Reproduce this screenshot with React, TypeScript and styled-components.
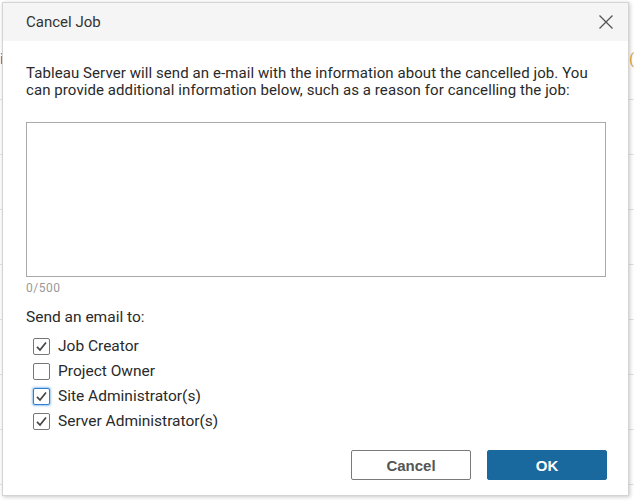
import React from "react";
import styled, { createGlobalStyle } from "styled-components";

const Global = createGlobalStyle`
  html, body { margin: 0; padding: 0; background: #fff; }
  body { width: 634px; height: 502px; overflow: hidden; font-family: Roboto, "Liberation Sans", Arial, sans-serif; }
  * { box-sizing: border-box; }
`;

const Page = styled.div`
  position: relative;
  width: 634px;
  height: 502px;
  overflow: hidden;
  background: #fff;
`;

const BgList = styled.div`
  display: flex;
  flex-direction: column;
  padding-top: 45px;
`;

const BgRow = styled.div`
  height: 55px;
  border-bottom: 1px solid #e3e3e3;
  display: flex;
  align-items: center;
  justify-content: space-between;
  font-size: 14px;
`;

const BgMark = styled.span<{ $c: string }>`
  color: ${(p) => p.$c};
  font-size: 14px;
  margin-top: -26px;
`;

const Dialog = styled.div`
  position: absolute;
  left: 2px;
  top: 2px;
  width: 627px;
  height: 494px;
  background: #fff;
  border: 1px solid #d4d4d4;
  box-shadow: 1px 1px 4px rgba(0, 0, 0, 0.22);
  display: flex;
  flex-direction: column;
`;

const Header = styled.div`
  height: 38px;
  background: #f5f5f5;
  display: flex;
  align-items: center;
  justify-content: space-between;
  padding: 0 10px 0 23px;
`;

const Title = styled.div`
  font-size: 15px;
  color: #333;
`;

const CloseButton = styled.button`
  width: 24px;
  height: 24px;
  border: none;
  background: transparent;
  padding: 0;
  display: flex;
  align-items: center;
  justify-content: center;
  cursor: pointer;
`;

const Body = styled.div`
  flex: 1;
  display: flex;
  flex-direction: column;
  padding: 24px 21px 15px 23px;
`;

const Intro = styled.p`
  margin: 0;
  font-size: 15px;
  letter-spacing: 0.08px;
  line-height: 17px;
  color: #2a2a2a;
`;

const TextArea = styled.textarea`
  margin-top: 23px;
  width: 580px;
  height: 155px;
  border: 1px solid #a9a9a9;
  border-radius: 0;
  resize: none;
  outline: none;
  font-family: inherit;
  font-size: 14px;
`;

const Counter = styled.div`
  margin-top: 5px;
  font-size: 12px;
  letter-spacing: 0.5px;
  line-height: 13px;
  color: #999;
`;

const SectionLabel = styled.div`
  margin-top: 13px;
  font-size: 15.5px;
  line-height: 18px;
  color: #2a2a2a;
`;

const CheckList = styled.div`
  margin-top: 12px;
  display: flex;
  flex-direction: column;
  gap: 9px;
  padding-left: 7px;
`;

const CheckRow = styled.label`
  display: flex;
  align-items: center;
  gap: 8px;
  height: 16px;
  font-size: 15.5px;
  color: #2a2a2a;
`;

const Box = styled.span<{ $focus?: boolean }>`
  width: 17px;
  height: 17px;
  border: 1px solid ${(p) => (p.$focus ? "#2f7fd1" : "#777")};
  border-radius: 2px;
  background: #fff;
  display: flex;
  align-items: center;
  justify-content: center;
  box-shadow: ${(p) => (p.$focus ? "0 0 2px 1px rgba(70,150,230,0.55)" : "none")};
`;

const Footer = styled.div`
  margin-top: auto;
  display: flex;
  justify-content: flex-end;
  gap: 16px;
`;

const Btn = styled.button<{ $primary?: boolean }>`
  width: 120px;
  height: 30px;
  border-radius: 2px;
  font-family: "Liberation Sans", Arial, sans-serif;
  font-weight: 700;
  font-size: 15px;
  cursor: pointer;
  border: 1px solid ${(p) => (p.$primary ? "#1a699e" : "#7a7a7a")};
  background: ${(p) => (p.$primary ? "#1a699e" : "#fff")};
  color: ${(p) => (p.$primary ? "#fff" : "#555")};
`;

const Check = () => (
  <svg width="13" height="13" viewBox="0 0 13 13">
    <path d="M2 6.8 L5 10 L11 2.5" fill="none" stroke="#444" strokeWidth="1.7" />
  </svg>
);

const items = [
  { label: "Job Creator", checked: true },
  { label: "Project Owner", checked: false },
  { label: "Site Administrator(s)", checked: true, focus: true },
  { label: "Server Administrator(s)", checked: true },
];

export default function App() {
  return (
    <Page>
      <Global />
      <BgList>
        {Array.from({ length: 8 }).map((_, i) => (
          <BgRow key={i}>
            {i === 0 ? <BgMark $c="#2a7ab8">i</BgMark> : <span />}
            {i === 0 ? <BgMark $c="#e0a040">(</BgMark> : <span />}
          </BgRow>
        ))}
      </BgList>
      <Dialog>
        <Header>
          <Title>Cancel Job</Title>
          <CloseButton aria-label="Close">
            <svg width="16" height="16" viewBox="0 0 16 16">
              <path d="M1.5 1.5 L14.5 14.5 M14.5 1.5 L1.5 14.5" stroke="#555" strokeWidth="1.3" fill="none" />
            </svg>
          </CloseButton>
        </Header>
        <Body>
          <Intro>
            Tableau Server will send an e-mail with the information about the cancelled job. You
            can provide additional information below, such as a reason for cancelling the job:
          </Intro>
          <TextArea />
          <Counter>0/500</Counter>
          <SectionLabel>Send an email to:</SectionLabel>
          <CheckList>
            {items.map((it) => (
              <CheckRow key={it.label}>
                <Box $focus={it.focus}>{it.checked && <Check />}</Box>
                {it.label}
              </CheckRow>
            ))}
          </CheckList>
          <Footer>
            <Btn>Cancel</Btn>
            <Btn $primary>OK</Btn>
          </Footer>
        </Body>
      </Dialog>
    </Page>
  );
}
